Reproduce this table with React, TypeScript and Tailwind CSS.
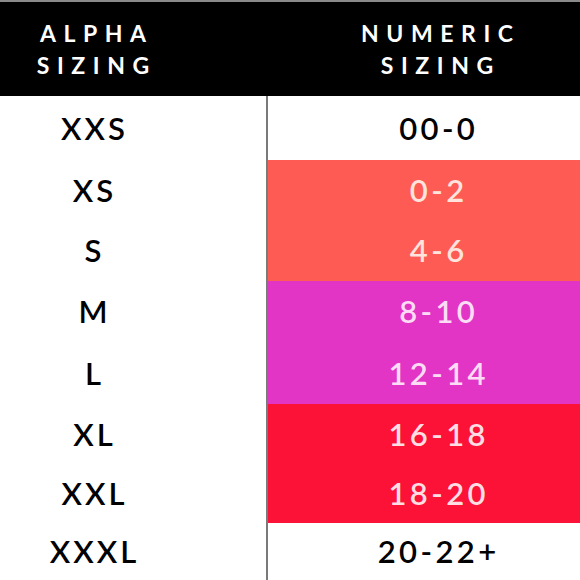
const rows = [
  { alpha: "XXS", num: "00-0", h: "h-[64px]", bg: "bg-white", text: "text-black" },
  { alpha: "XS", num: "0-2", h: "h-[60px]", bg: "bg-[#fd5b54]", text: "text-[#ffe3dc]" },
  { alpha: "S", num: "4-6", h: "h-[61px]", bg: "bg-[#fd5b54]", text: "text-[#ffe3dc]" },
  { alpha: "M", num: "8-10", h: "h-[61px]", bg: "bg-[#e234c5]", text: "text-[#fcdcf5]" },
  { alpha: "L", num: "12-14", h: "h-[62px]", bg: "bg-[#e234c5]", text: "text-[#fcdcf5]" },
  { alpha: "XL", num: "16-18", h: "h-[60px]", bg: "bg-[#fc1137]", text: "text-[#ffdde2]" },
  { alpha: "XXL", num: "18-20", h: "h-[59px]", bg: "bg-[#fc1137]", text: "text-[#ffdde2]" },
  { alpha: "XXXL", num: "20-22+", h: "h-[57px]", bg: "bg-white", text: "text-black" },
]

export default function App() {
  return (
    <div className="w-[580px] h-[580px] overflow-hidden bg-white font-['Lato','Liberation_Sans',sans-serif]">
      {/* header */}
      <div className="h-[96px] bg-black border-t-2 border-[#8a8a8a] flex text-white font-bold text-[23px] leading-[32px] tracking-[0.33em]">
        <div className="w-[266px] pr-[80px] flex flex-col items-center justify-center">
          <span className="pl-[0.33em]">ALPHA</span>
          <span className="pl-[0.33em]">SIZING</span>
        </div>
        <div className="flex-1 pl-[28px] flex flex-col items-center justify-center">
          <span className="pl-[0.33em]">NUMERIC</span>
          <span className="pl-[0.33em]">SIZING</span>
        </div>
      </div>

      {/* rows */}
      <div className="flex flex-col">
        {rows.map((r) => (
          <div key={r.alpha} className={`flex ${r.h}`}>
            <div className="w-[266px] pr-[80px] flex items-center justify-center text-black font-semibold text-[31px] tracking-[0.1em]">
              <span className="pl-[0.1em]">{r.alpha}</span>
            </div>
            <div className={`flex-1 border-l-2 border-[#7a7a7a] pl-[26px] flex items-center justify-center font-semibold text-[31px] tracking-[0.11em] ${r.bg} ${r.text}`}>
              <span className="pl-[0.11em]">{r.num}</span>
            </div>
          </div>
        ))}
      </div>
    </div>
  )
}
